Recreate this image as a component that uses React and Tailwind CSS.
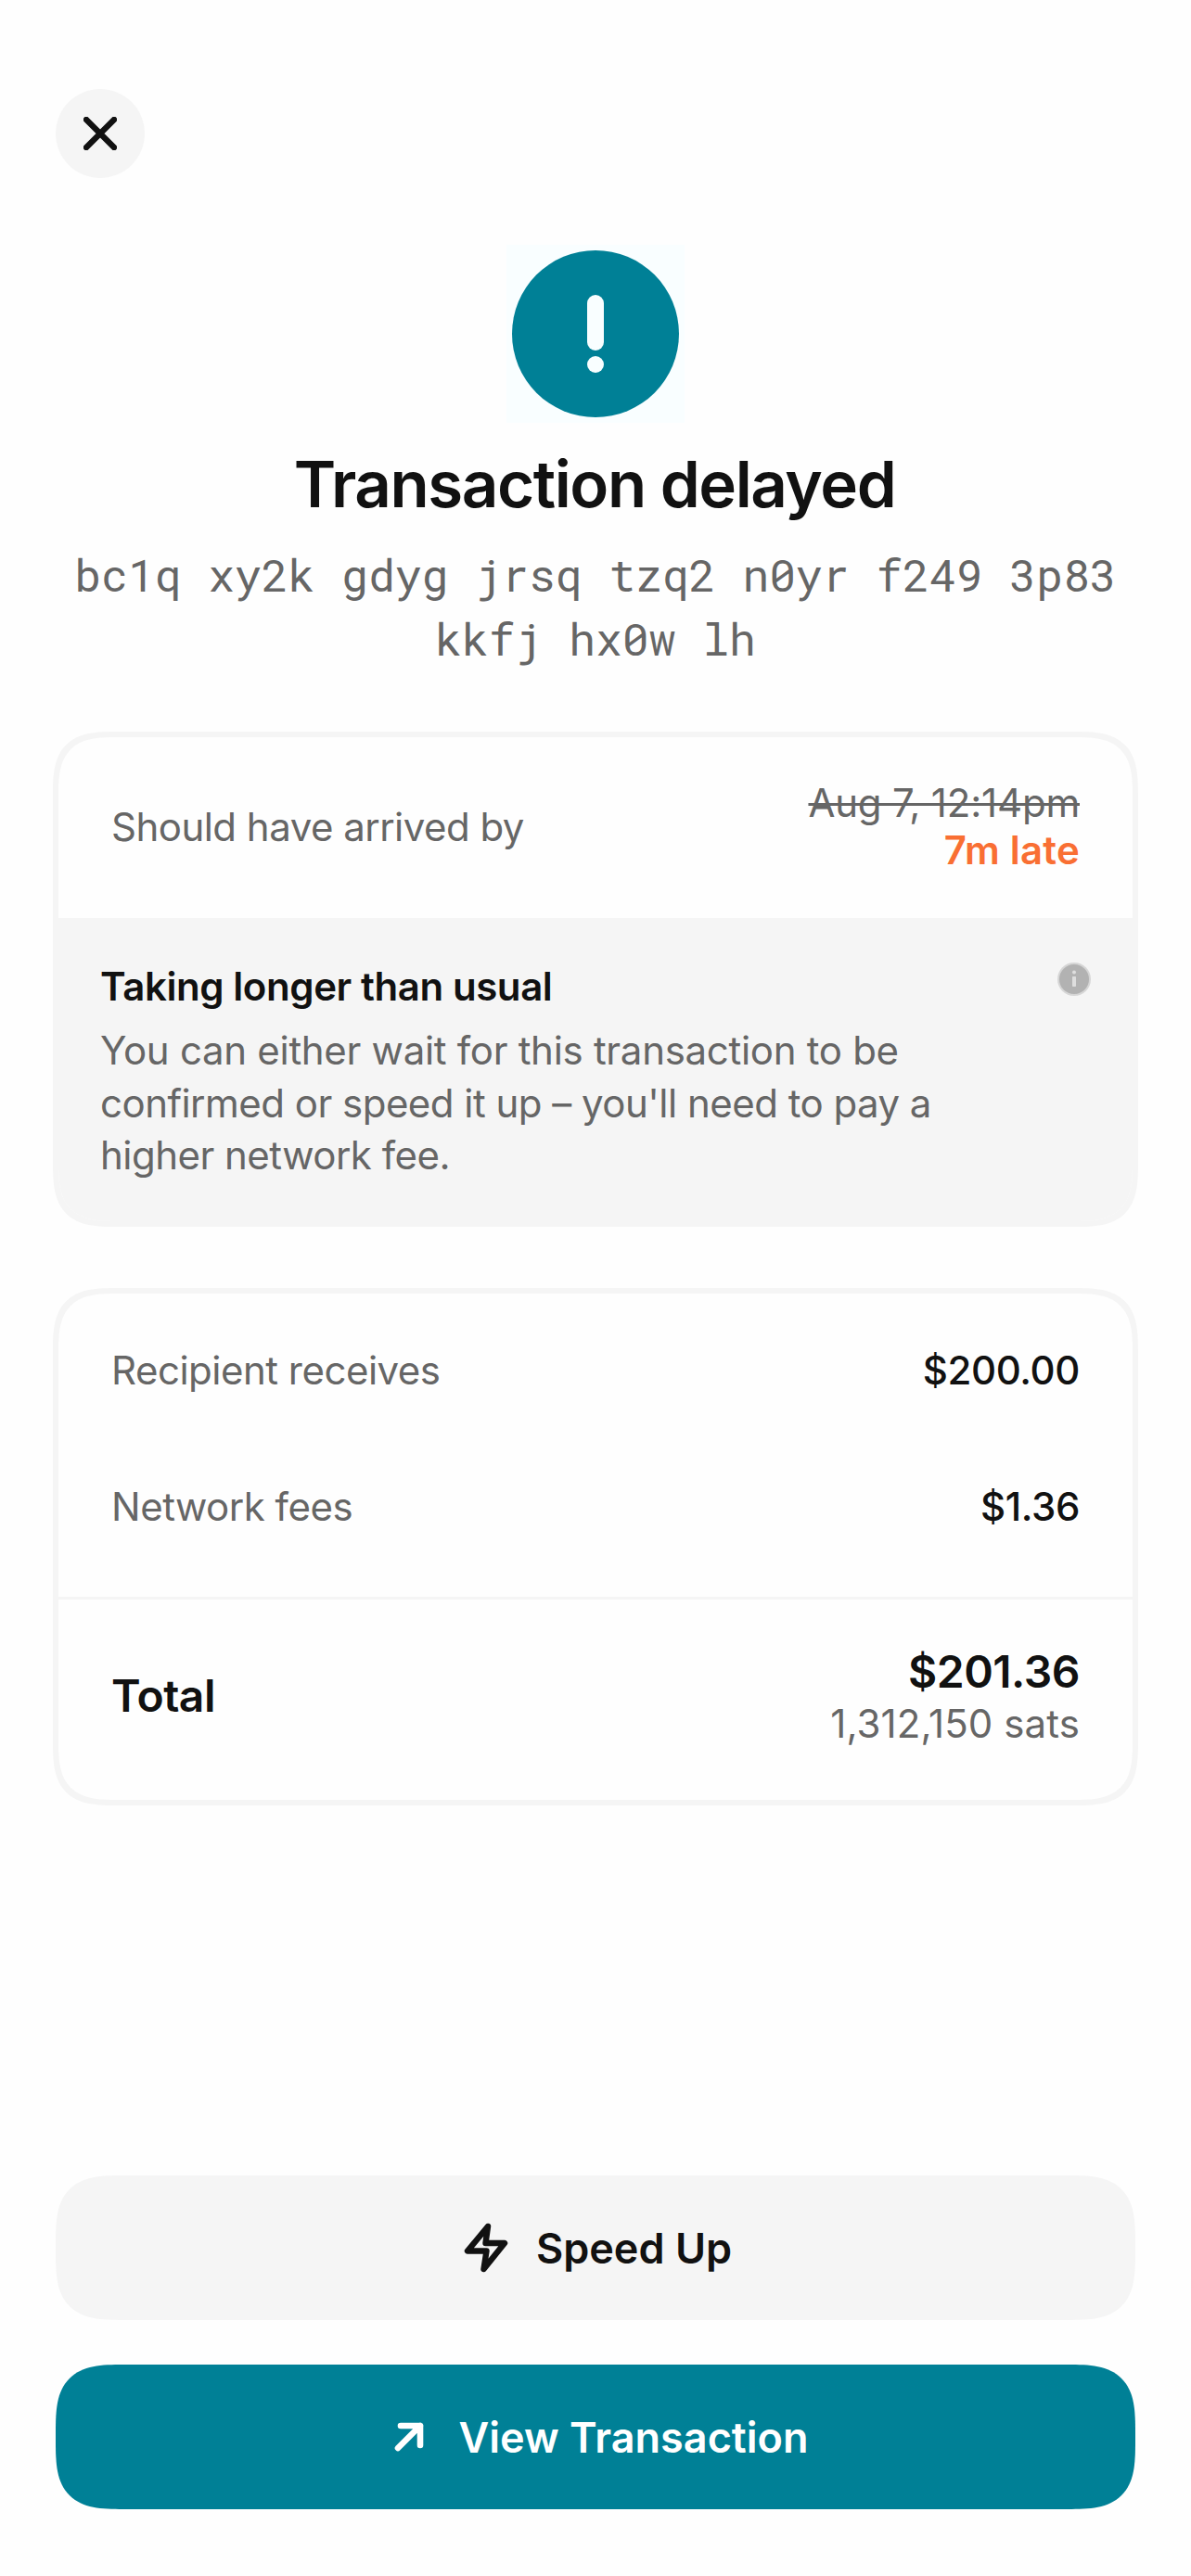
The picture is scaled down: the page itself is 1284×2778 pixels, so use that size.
function CloseIcon() {
  return (
    <svg width="36" height="36" viewBox="0 0 36 36" fill="none" stroke="#111" strokeWidth="6.4" strokeLinecap="round">
      <path d="M3 3 33 33M33 3 3 33" />
    </svg>
  );
}

function AlertIcon() {
  return (
    <svg width="192" height="192" viewBox="0 0 192 192" className="bg-[#f9feff]">
      <circle cx="96" cy="96" r="90" fill="#008096" />
      <rect x="87" y="54" width="18" height="60" rx="9" fill="#f9feff" />
      <circle cx="96" cy="129" r="9" fill="#f9feff" />
    </svg>
  );
}

function InfoIcon() {
  return (
    <svg width="36" height="36" viewBox="0 0 36 36">
      <circle cx="18" cy="18" r="18" fill="#d6d6d6" />
      <circle cx="18" cy="18" r="16" fill="#b2b2b2" />
      <circle cx="18" cy="10.5" r="2" fill="#dedede" />
      <rect x="16" y="15" width="4" height="11" rx="0.8" fill="#dedede" />
    </svg>
  );
}

function BoltIcon() {
  return (
    <svg width="48" height="54" viewBox="0 0 48 54" fill="none" stroke="#111" strokeWidth="6.4" strokeLinejoin="round">
      <path d="M26 4 4 30.5H24.5L21.5 50 44 22H23.5Z" />
    </svg>
  );
}

function ArrowIcon() {
  return (
    <svg width="48" height="48" viewBox="0 0 48 48" fill="none" stroke="#fff" strokeWidth="6.6" strokeLinecap="round" strokeLinejoin="round">
      <path d="M15 12H36V33M36 12 12 36" />
    </svg>
  );
}

function Card({ className, children }) {
  return (
    <section className={`w-[1170px] border-6 border-[#f5f5f5] rounded-[70px] [corner-shape:superellipse(1.6)] ${className}`}>
      {children}
    </section>
  );
}

function Amount({ label, value }) {
  return (
    <div className="flex h-[147px] items-center justify-between tracking-[-0.5px]">
      <span className="text-[#666]">{label}</span>
      <span className="font-medium tracking-[-0.4px]">{value}</span>
    </div>
  );
}

export default function App() {
  return (
    <main className="flex h-[2778px] w-[1284px] flex-col items-center bg-[#fefefe] pt-24 font-['Inter',sans-serif] text-[42px] leading-[51px] text-[#111]">
      <button className="ml-[60px] flex size-24 items-center justify-center self-start rounded-full bg-[#f5f5f5]">
        <CloseIcon />
      </button>
      <div className="mt-[72px]">
        <AlertIcon />
      </div>
      <h1 className="mt-[24px] pr-[2px] text-[69px] leading-[84px] font-semibold tracking-[-1.42px]">Transaction delayed</h1>
      <p className="mt-[21px] w-[1164px] text-center font-['Roboto_Mono','Liberation_Mono',monospace] text-[48px] leading-[69px] text-[#666]">
        bc1q xy2k gdyg jrsq tzq2 n0yr f249 3p83 kkfj hx0w lh
      </p>

      <Card className="mt-[66px] flex h-[534px] flex-col overflow-hidden">
        <div className="flex h-[195px] items-center justify-between px-[57px] pb-[3px]">
          <span className="tracking-[-0.52px] text-[#666]">Should have arrived by</span>
          <div className="text-right">
            <div className="tracking-[-0.2px] text-[#666] line-through decoration-[3px]">Aug 7, 12:14pm</div>
            <div className="font-semibold tracking-[0.2px] text-[#f96f33]">7m late</div>
          </div>
        </div>
        <div className="flex flex-1 justify-between bg-[#f5f5f5] px-[45px] pt-12">
          <div>
            <h2 className="font-semibold tracking-[-0.42px]">Taking longer than usual</h2>
            <p className="mt-4 w-[930px] leading-[56.6px] tracking-[-0.52px] text-[#666]">
              <span className="tracking-[-0.3px]">You can either wait for this transaction to be</span>{" "}
              confirmed or speed it up – you'll need to pay a higher network fee.
            </p>
          </div>
          <InfoIcon />
        </div>
      </Card>

      <Card className="mt-[66px] h-[558px]">
        <div className="h-[330px] border-b-3 border-[#f5f5f5] px-[57px] pt-[9px]">
          <Amount label="Recipient receives" value="$200.00" />
          <Amount label="Network fees" value="$1.36" />
        </div>
        <div className="flex h-[208px] items-center justify-between px-[57px]">
          <span className="pb-[2px] text-[48px] font-semibold tracking-[-0.5px]">Total</span>
          <div className="text-right">
            <div className="mb-[2px] text-[48px] leading-[57px] font-semibold tracking-[-0.5px]">$201.36</div>
            <div className="tracking-[0.1px] text-[#666]">1,312,150 sats</div>
          </div>
        </div>
      </Card>

      <footer className="mt-auto mb-[72px] flex w-[1164px] flex-col gap-12 text-[45px] font-semibold">
        <button className="flex h-[156px] items-center justify-center gap-[30px] rounded-[73px] bg-[#f5f5f5] pl-[5px] [corner-shape:superellipse(1.6)]">
          <BoltIcon />
          Speed Up
        </button>
        <button className="flex h-[156px] items-center justify-center gap-[30px] rounded-[73px] bg-[#008096] pl-1 text-white [corner-shape:superellipse(1.6)]">
          <ArrowIcon />
          View Transaction
        </button>
      </footer>
    </main>
  );
}
